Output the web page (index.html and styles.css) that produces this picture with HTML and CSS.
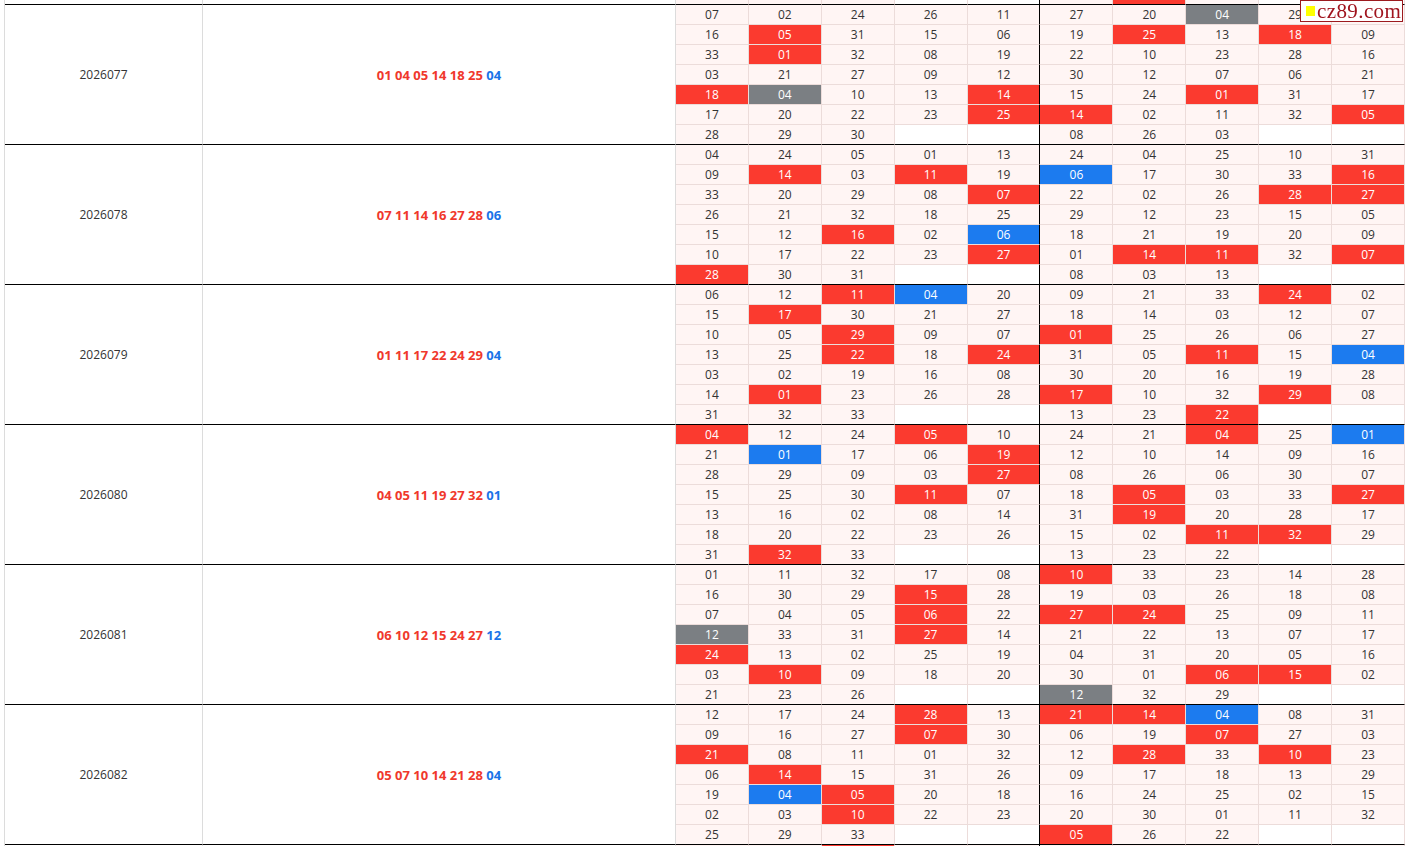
FILE: index.html
```html
<!DOCTYPE html>
<html lang="zh-CN">
<head>
<meta charset="utf-8">
<title>走势</title>
<link rel="stylesheet" href="styles.css">
</head>
<body>
<div class="mark"><span class="sq"></span><span class="mt">cz89.com</span></div>
<div class="page">
<table class="grid">
<colgroup><col class="c1"><col class="c2"><col><col><col><col><col><col><col><col><col><col></colgroup>
<tbody>
<tr class="f l"><td class="w"></td><td class="w"></td><td></td><td></td><td></td><td class="e"></td><td class="e"></td><td></td><td class="r"></td><td></td><td class="e"></td><td class="e"></td></tr>

<tr class="f"><td class="p" rowspan="7">2026077</td><td class="n" rowspan="7"><b>01 04 05 14 18 25</b> <i>04</i></td><td>07</td><td>02</td><td>24</td><td>26</td><td>11</td><td>27</td><td>20</td><td class="g">04</td><td>29</td><td></td></tr>
<tr><td>16</td><td class="r">05</td><td>31</td><td>15</td><td>06</td><td>19</td><td class="r">25</td><td>13</td><td class="r">18</td><td>09</td></tr>
<tr><td>33</td><td class="r">01</td><td>32</td><td>08</td><td>19</td><td>22</td><td>10</td><td>23</td><td>28</td><td>16</td></tr>
<tr><td>03</td><td>21</td><td>27</td><td>09</td><td>12</td><td>30</td><td>12</td><td>07</td><td>06</td><td>21</td></tr>
<tr><td class="r">18</td><td class="g">04</td><td>10</td><td>13</td><td class="r">14</td><td>15</td><td>24</td><td class="r">01</td><td>31</td><td>17</td></tr>
<tr><td>17</td><td>20</td><td>22</td><td>23</td><td class="r">25</td><td class="r">14</td><td>02</td><td>11</td><td>32</td><td class="r">05</td></tr>
<tr class="l"><td>28</td><td>29</td><td>30</td><td class="e"></td><td class="e"></td><td>08</td><td>26</td><td>03</td><td class="e"></td><td class="e"></td></tr>

<tr class="f"><td class="p" rowspan="7">2026078</td><td class="n" rowspan="7"><b>07 11 14 16 27 28</b> <i>06</i></td><td>04</td><td>24</td><td>05</td><td>01</td><td>13</td><td>24</td><td>04</td><td>25</td><td>10</td><td>31</td></tr>
<tr><td>09</td><td class="r">14</td><td>03</td><td class="r">11</td><td>19</td><td class="b">06</td><td>17</td><td>30</td><td>33</td><td class="r">16</td></tr>
<tr><td>33</td><td>20</td><td>29</td><td>08</td><td class="r">07</td><td>22</td><td>02</td><td>26</td><td class="r">28</td><td class="r">27</td></tr>
<tr><td>26</td><td>21</td><td>32</td><td>18</td><td>25</td><td>29</td><td>12</td><td>23</td><td>15</td><td>05</td></tr>
<tr><td>15</td><td>12</td><td class="r">16</td><td>02</td><td class="b">06</td><td>18</td><td>21</td><td>19</td><td>20</td><td>09</td></tr>
<tr><td>10</td><td>17</td><td>22</td><td>23</td><td class="r">27</td><td>01</td><td class="r">14</td><td class="r">11</td><td>32</td><td class="r">07</td></tr>
<tr class="l"><td class="r">28</td><td>30</td><td>31</td><td class="e"></td><td class="e"></td><td>08</td><td>03</td><td>13</td><td class="e"></td><td class="e"></td></tr>

<tr class="f"><td class="p" rowspan="7">2026079</td><td class="n" rowspan="7"><b>01 11 17 22 24 29</b> <i>04</i></td><td>06</td><td>12</td><td class="r">11</td><td class="b">04</td><td>20</td><td>09</td><td>21</td><td>33</td><td class="r">24</td><td>02</td></tr>
<tr><td>15</td><td class="r">17</td><td>30</td><td>21</td><td>27</td><td>18</td><td>14</td><td>03</td><td>12</td><td>07</td></tr>
<tr><td>10</td><td>05</td><td class="r">29</td><td>09</td><td>07</td><td class="r">01</td><td>25</td><td>26</td><td>06</td><td>27</td></tr>
<tr><td>13</td><td>25</td><td class="r">22</td><td>18</td><td class="r">24</td><td>31</td><td>05</td><td class="r">11</td><td>15</td><td class="b">04</td></tr>
<tr><td>03</td><td>02</td><td>19</td><td>16</td><td>08</td><td>30</td><td>20</td><td>16</td><td>19</td><td>28</td></tr>
<tr><td>14</td><td class="r">01</td><td>23</td><td>26</td><td>28</td><td class="r">17</td><td>10</td><td>32</td><td class="r">29</td><td>08</td></tr>
<tr class="l"><td>31</td><td>32</td><td>33</td><td class="e"></td><td class="e"></td><td>13</td><td>23</td><td class="r">22</td><td class="e"></td><td class="e"></td></tr>

<tr class="f"><td class="p" rowspan="7">2026080</td><td class="n" rowspan="7"><b>04 05 11 19 27 32</b> <i>01</i></td><td class="r">04</td><td>12</td><td>24</td><td class="r">05</td><td>10</td><td>24</td><td>21</td><td class="r">04</td><td>25</td><td class="b">01</td></tr>
<tr><td>21</td><td class="b">01</td><td>17</td><td>06</td><td class="r">19</td><td>12</td><td>10</td><td>14</td><td>09</td><td>16</td></tr>
<tr><td>28</td><td>29</td><td>09</td><td>03</td><td class="r">27</td><td>08</td><td>26</td><td>06</td><td>30</td><td>07</td></tr>
<tr><td>15</td><td>25</td><td>30</td><td class="r">11</td><td>07</td><td>18</td><td class="r">05</td><td>03</td><td>33</td><td class="r">27</td></tr>
<tr><td>13</td><td>16</td><td>02</td><td>08</td><td>14</td><td>31</td><td class="r">19</td><td>20</td><td>28</td><td>17</td></tr>
<tr><td>18</td><td>20</td><td>22</td><td>23</td><td>26</td><td>15</td><td>02</td><td class="r">11</td><td class="r">32</td><td>29</td></tr>
<tr class="l"><td>31</td><td class="r">32</td><td>33</td><td class="e"></td><td class="e"></td><td>13</td><td>23</td><td>22</td><td class="e"></td><td class="e"></td></tr>

<tr class="f"><td class="p" rowspan="7">2026081</td><td class="n" rowspan="7"><b>06 10 12 15 24 27</b> <i>12</i></td><td>01</td><td>11</td><td>32</td><td>17</td><td>08</td><td class="r">10</td><td>33</td><td>23</td><td>14</td><td>28</td></tr>
<tr><td>16</td><td>30</td><td>29</td><td class="r">15</td><td>28</td><td>19</td><td>03</td><td>26</td><td>18</td><td>08</td></tr>
<tr><td>07</td><td>04</td><td>05</td><td class="r">06</td><td>22</td><td class="r">27</td><td class="r">24</td><td>25</td><td>09</td><td>11</td></tr>
<tr><td class="g">12</td><td>33</td><td>31</td><td class="r">27</td><td>14</td><td>21</td><td>22</td><td>13</td><td>07</td><td>17</td></tr>
<tr><td class="r">24</td><td>13</td><td>02</td><td>25</td><td>19</td><td>04</td><td>31</td><td>20</td><td>05</td><td>16</td></tr>
<tr><td>03</td><td class="r">10</td><td>09</td><td>18</td><td>20</td><td>30</td><td>01</td><td class="r">06</td><td class="r">15</td><td>02</td></tr>
<tr class="l"><td>21</td><td>23</td><td>26</td><td class="e"></td><td class="e"></td><td class="g">12</td><td>32</td><td>29</td><td class="e"></td><td class="e"></td></tr>

<tr class="f"><td class="p" rowspan="7">2026082</td><td class="n" rowspan="7"><b>05 07 10 14 21 28</b> <i>04</i></td><td>12</td><td>17</td><td>24</td><td class="r">28</td><td>13</td><td class="r">21</td><td class="r">14</td><td class="b">04</td><td>08</td><td>31</td></tr>
<tr><td>09</td><td>16</td><td>27</td><td class="r">07</td><td>30</td><td>06</td><td>19</td><td class="r">07</td><td>27</td><td>03</td></tr>
<tr><td class="r">21</td><td>08</td><td>11</td><td>01</td><td>32</td><td>12</td><td class="r">28</td><td>33</td><td class="r">10</td><td>23</td></tr>
<tr><td>06</td><td class="r">14</td><td>15</td><td>31</td><td>26</td><td>09</td><td>17</td><td>18</td><td>13</td><td>29</td></tr>
<tr><td>19</td><td class="b">04</td><td class="r">05</td><td>20</td><td>18</td><td>16</td><td>24</td><td>25</td><td>02</td><td>15</td></tr>
<tr><td>02</td><td>03</td><td class="r">10</td><td>22</td><td>23</td><td>20</td><td>30</td><td>01</td><td>11</td><td>32</td></tr>
<tr class="l"><td>25</td><td>29</td><td>33</td><td class="e"></td><td class="e"></td><td class="r">05</td><td>26</td><td>22</td><td class="e"></td><td class="e"></td></tr>

<tr class="f"><td class="w"></td><td class="w"></td><td></td><td></td><td class="r"></td><td></td><td></td><td></td><td></td><td></td><td></td><td></td></tr>
</tbody>
</table>
</div>
</body>
</html>
```
FILE: styles.css
```css
html, body {
  margin: 0;
  padding: 0;
  background: #fff;
}
body {
  font-family: "Open Sans", "Noto Sans CJK SC", sans-serif;
  font-size: 12px;
  color: #333;
  overflow: hidden;
  height: 846px;
}
.page {
  padding-left: 4px;
  margin-top: -15px;
}
.grid {
  border-collapse: separate;
  border-spacing: 0;
  table-layout: fixed;
  width: 1401px;
  border-left: 1px solid #dcdcdc;
}
.c1 { width: 198px; }
.c2 { width: 473px; }
.grid td {
  padding: 0;
  height: 19px;
  line-height: 18px;
  text-align: center;
  white-space: nowrap;
  overflow: hidden;
  background: #fff5f4;
  border-right: 1px solid #ecdcda;
  border-bottom: 1px solid #ecdcda;
}
.grid tr { height: 20px; }
.grid td.p,
.grid td.n,
.grid td.w {
  background: #fff;
  border-right-color: #dcdcdc;
  border-bottom-color: #000;
}
.grid td.n { font-size: 13px; }
.grid td.n b { color: #f0382c; font-weight: 700; }
.grid td.n i { color: #1a73e8; font-weight: 700; font-style: normal; }
.grid tr.l td { border-bottom-color: #000; }
.grid tr.f td:nth-child(7),
.grid tr:not(.f) td:nth-child(5) { border-right-color: #000; }
.grid td.r { background: #fb3a2f; color: #fff; }
.grid td.b { background: #1c7bef; color: #fff; }
.grid td.g { background: #7b7f83; color: #fff; }
.grid td.e { background: #fff; }
.mark {
  position: fixed;
  top: 0;
  left: 1300px;
  width: 101px;
  height: 20px;
  border: 1px solid #9c1a1e;
  background: #fff;
  display: flex;
  align-items: center;
}
.sq {
  width: 9px;
  height: 10px;
  background: #ffff00;
  margin-left: 5px;
  margin-right: 2px;
}
.mt {
  font-family: "Liberation Serif", serif;
  font-size: 21px;
  letter-spacing: 0.4px;
  color: #a0141e;
  line-height: 20px;
}
```
